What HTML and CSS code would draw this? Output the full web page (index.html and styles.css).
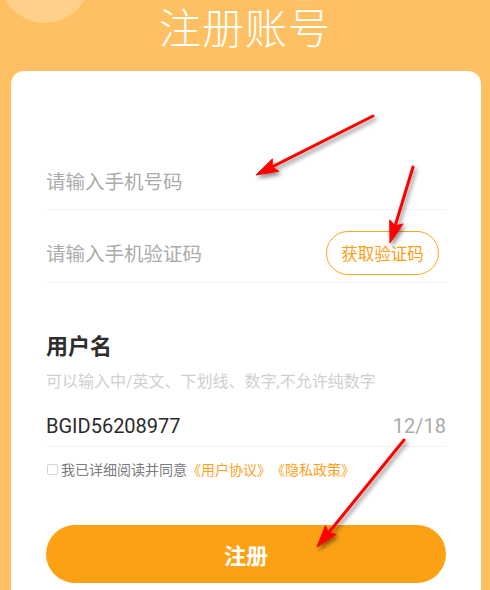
FILE: index.html
```html
<!DOCTYPE html>
<html lang="zh-CN">
<head>
<meta charset="utf-8">
<title>注册账号</title>
<link rel="stylesheet" href="styles.css">
</head>
<body>
<div class="page">
  <div class="bubble bubble-big"></div>
  <div class="bubble bubble-small"></div>
  <h1 class="title">注册账号</h1>
  <div class="card">
    <div class="row row-phone">
      <input class="field" type="text" placeholder="请输入手机号码">
    </div>
    <div class="row row-code">
      <input class="field" type="text" placeholder="请输入手机验证码">
      <button class="code-btn" type="button">获取验证码</button>
    </div>
    <div class="label">用户名</div>
    <div class="hint">可以输入中/英文、下划线、数字,不允许纯数字</div>
    <div class="row row-user">
      <input class="field field-user" type="text" value="BGID56208977">
      <span class="count">12/18</span>
    </div>
    <label class="agree">
      <span class="check"></span>
      <span class="agree-text">我已详细阅读并同意</span><span class="link">《用户协议》</span><span class="link">《隐私政策》</span>
    </label>
    <button class="submit" type="button">注册</button>
  </div>
  <svg class="arrows" width="490" height="590" viewBox="0 0 490 590">
    <defs>
      <filter id="sh" x="-20%" y="-20%" width="140%" height="140%">
        <feDropShadow dx="2" dy="3" stdDeviation="2" flood-color="#000" flood-opacity="0.45"/>
      </filter>
    </defs>
    <g filter="url(#sh)" fill="#ff0000" stroke="#ff0000">
      <line x1="373" y1="116" x2="272.1" y2="166.9" stroke-width="3" stroke-linecap="round"/>
      <polygon points="256,175 278.8,171.3 272.1,166.9 272.4,158.9" stroke-width="1" stroke-linejoin="round"/>
      <line x1="413" y1="167" x2="395.2" y2="225.8" stroke-width="3" stroke-linecap="round"/>
      <polygon points="390,243 403.1,223.9 395.2,225.8 389.7,219.9" stroke-width="1" stroke-linejoin="round"/>
      <line x1="404" y1="440" x2="328.4" y2="533" stroke-width="3" stroke-linecap="round"/>
      <polygon points="317,547 336.3,534.3 328.4,533 325.5,525.5" stroke-width="1" stroke-linejoin="round"/>
    </g>
  </svg>
</div>
</body>
</html>
```

FILE: styles.css
```css
* { box-sizing: border-box; }
html, body {
  margin: 0;
  padding: 0;
}
body {
  width: 490px;
  height: 590px;
  overflow: hidden;
  background: #fec062;
  font-family: Roboto, "Noto Sans CJK SC", "Noto Sans", sans-serif;
}
.page {
  position: relative;
  width: 490px;
  height: 590px;
  overflow: hidden;
}
.bubble {
  position: absolute;
  border-radius: 50%;
  background: rgba(255, 255, 255, 0.25);
}
.bubble-big {
  left: 0;
  top: -67px;
  width: 90px;
  height: 90px;
}
.bubble-small {
  left: 284px;
  top: -38px;
  width: 40px;
  height: 40px;
  background: rgba(255, 255, 255, 0.18);
}
.title {
  position: relative;
  margin: 0;
  height: 52px;
  line-height: 52px;
  text-align: center;
  font-size: 42px;
  font-weight: 300;
  color: #ffffff;
  font-family: "Noto Sans CJK SC", sans-serif;
  letter-spacing: 1px;
}
.card {
  position: relative;
  margin: 19px 9px 0 11px;
  height: 600px;
  background: #ffffff;
  border-radius: 13px;
  padding: 82px 35px 0 35px;
}
.row {
  display: flex;
  align-items: center;
  border-bottom: 1px solid #f2f2f2;
}
.row-phone {
  padding: 14px 0;
}
.row-code {
  padding: 21px 0 7px;
}
.field {
  flex: 1;
  min-width: 0;
  border: none;
  outline: none;
  padding: 0;
  margin: 0;
  background: transparent;
  font-family: "Noto Sans CJK SC", sans-serif;
  font-size: 19.5px;
  line-height: 28px;
  height: 28px;
  color: #333;
}
.field::placeholder {
  color: #ababab;
}
.code-btn {
  width: 113px;
  height: 44px;
  margin-right: 7px;
  border: 1px solid #ffa41f;
  border-radius: 22px;
  background: #fff;
  color: #ff9d12;
  font-family: "Noto Sans CJK SC", sans-serif;
  font-size: 16.5px;
  padding: 0;
}
.label {
  margin-top: 46px;
  line-height: 30px;
  font-size: 22px;
  font-weight: 700;
  color: #2e2e2e;
  font-family: "Noto Sans CJK SC", sans-serif;
}
.hint {
  margin-top: 13px;
  line-height: 20px;
  font-size: 16px;
  color: #cfcfcf;
}
.row-user {
  padding: 20px 0 6px;
}
.field-user {
  font-family: Roboto, sans-serif;
  font-size: 20px;
  color: #2b2b2b;
}
.count {
  font-size: 20px;
  line-height: 28px;
  color: #ababab;
}
.agree {
  display: flex;
  align-items: center;
  margin-top: 12px;
  line-height: 20px;
  font-size: 14px;
  font-family: "Noto Sans CJK SC", sans-serif;
}
.check {
  width: 11px;
  height: 11px;
  border: 1px solid #d6d6d6;
  border-radius: 2px;
  margin-right: 3px;
  margin-left: 1px;
}
.agree-text {
  color: #7b7b7b;
}
.link {
  color: #ff9f1a;
}
.submit {
  display: block;
  width: 100%;
  margin-top: 46px;
  height: 58px;
  border: none;
  border-radius: 29px;
  background: #fda114;
  color: #fff;
  font-family: "Noto Sans CJK SC", sans-serif;
  font-size: 22px;
  font-weight: 700;
  padding: 0;
}
.arrows {
  position: absolute;
  left: 0;
  top: 0;
  pointer-events: none;
}
```
